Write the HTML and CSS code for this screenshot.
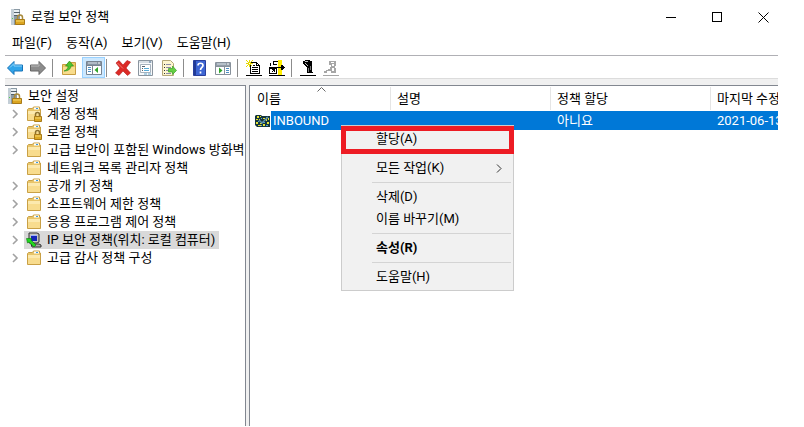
FILE: index.html
```html
<!DOCTYPE html>
<html lang="ko">
<head>
  <meta charset="UTF-8" />
  <title>로컬 보안 정책</title>
  <link rel="stylesheet" href="styles.css">
</head>
<body>

<!-- shared icons -->
<svg class="defs" aria-hidden="true">
  <symbol id="server" viewBox="0 0 16 18">
    <path d="M1 1h9v16H1z" fill="#8b9aa5"/>
    <path d="M1 1h3v16H1z" fill="#c3ced6"/>
    <path d="M4 2h5v2H4zM4 5h5v2H4z" fill="#e9eff2"/>
    <path d="M4 4h6v1H4zM4 7h6v1H4z" fill="#53616b"/>
    <path d="M2 10h1v1H2z" fill="#4fd04f"/>
    <path d="M7.500 12V9.500a2.500 2.500 0 0 1 5 0V12" fill="none" stroke="#a88a3c" stroke-width="1.500"/>
    <path d="M5.500 11.500h9v5h-9z" fill="#dba520" stroke="#a87a18"/>
    <path d="M6 13h8" stroke="#f4d66c"/>
  </symbol>
  <symbol id="folder" viewBox="0 0 16 16">
    <path d="M1.500 14.500v-11l1-1h4l1-1.500h6v2h1v11.500z" fill="#e8c56a" stroke="#c9a045"/>
    <path d="M8 1.500h5v2H8z" fill="#fff"/>
    <path d="M10 2h2v1h-2z" fill="#3c9be0"/>
    <path d="M2 5h12v9H2z" fill="#f8dc8e"/>
    <path d="M2 5h12v3H2z" fill="#fce9ae"/>
  </symbol>
  <symbol id="folder-lock" viewBox="0 0 16 16">
    <use href="#folder"/>
    <path d="M9.500 11V8.500a2 2 0 0 1 4 0V11" fill="none" stroke="#8d7230" stroke-width="1.500"/>
    <path d="M8.500 10.500h7v5h-7z" fill="#dca824" stroke="#a87a18"/>
    <path d="M9 12h6" stroke="#f4d66c"/>
  </symbol>
  <symbol id="chevron" viewBox="0 0 8 10">
    <path d="M2 1l4 4-4 4" fill="none" stroke="#a2a2a2" stroke-width="1.600"/>
  </symbol>
  <symbol id="arrow" viewBox="0 0 16 16">
    <path d="M.5 8L7 1.500V5h8.500v6H7v3.500z"/>
  </symbol>
</svg>

<div class="window">
  <header class="titlebar">
    <svg class="app-icon"><use href="#server"/></svg>
    <h1>로컬 보안 정책</h1>
    <div class="controls">
      <button aria-label="최소화"><svg viewBox="0 0 11 11"><path d="M0 5.500h10"/></svg></button>
      <button aria-label="최대화"><svg viewBox="0 0 11 11"><path d="M.5.5h9v9h-9z"/></svg></button>
      <button aria-label="닫기"><svg class="smooth" viewBox="0 0 11 11"><path d="M.5.5l10 10M10.500.5l-10 10"/></svg></button>
    </div>
  </header>

  <nav class="menubar">
    <button>파일(F)</button>
    <button>동작(A)</button>
    <button>보기(V)</button>
    <button>도움말(H)</button>
  </nav>

  <div class="toolbar">
    <button aria-label="뒤로"><svg viewBox="0 0 16 16"><use href="#arrow" fill="#31a5ea" stroke="#1672b8"/><path d="M3 7.500l4-4V6h8" fill="none" stroke="#8bd3fa"/></svg></button>
    <button aria-label="앞으로"><svg viewBox="0 0 16 16"><g transform="matrix(-1 0 0 1 16 0)"><use href="#arrow" fill="#8c8c8c" stroke="#666"/></g><path d="M1 6h8V3.500" fill="none" stroke="#bbb"/></svg></button>
    <span class="divider"></span>
    <button aria-label="한 수준 위로"><svg viewBox="0 0 16 16">
      <path d="M1.500 14.500v-10h5l1-2h7v12z" fill="#ecc765" stroke="#c79d42"/>
      <path d="M2 7h12v7H2z" fill="#f8dc8c"/>
      <path d="M3 11c3-1 4-3 4-5H4.500L8.500 1l4 5H10c0 3-3 5-7 5z" fill="#4cc431" stroke="#278c1c" stroke-width=".6"/>
    </svg></button>
    <button class="on" aria-label="콘솔 트리 표시" aria-pressed="true"><svg viewBox="0 0 16 16">
      <path d="M.5 1.500h15v13H.5z" fill="#fff" stroke="#788491"/>
      <path d="M1 2h14v3H1z" fill="#8794a3"/><path d="M2 3h9" stroke="#dbe3ea"/><path d="M12 3h2" stroke="#fff"/>
      <path d="M6.500 5v9M1 5.500h14" stroke="#788491"/>
      <path d="M2 7.500h3M2 9.500h3M2 11.500h3" stroke="#4c8fc4"/>
      <path d="M12 7v6L8.500 10z" fill="#2fa52b"/>
    </svg></button>
    <span class="divider"></span>
    <button aria-label="삭제"><svg viewBox="0 0 16 16">
      <path d="M1 3l3-2.500 4 4.500 4-4.500L15.500 2 11 8l4.500 5-3 2.500L8 11l-4 4.500L.5 13 5 8z" fill="#dc2a26" stroke="#b51a18" stroke-width=".6"/>
      <path d="M2.500 3L8 8.500" stroke="#f47a70"/>
    </svg></button>
    <button aria-label="속성"><svg viewBox="0 0 16 16">
      <path d="M.5 .5h14v15H.5z" fill="#f7f9fb" stroke="#8a949e"/>
      <path d="M1 2h13" stroke="#b4c0cb"/><path d="M11 2h2" stroke="#4c6f91"/>
      <path d="M2.500 4.500h10v8h-10z" fill="#fff" stroke="#a6b2bd"/>
      <path d="M4 6.500h3M4 8.500h1M4 10.500h1" stroke="#55616c"/><path d="M6 8.500h5M6 10.500h5" stroke="#58acd8"/>
      <path d="M6 14h3M10 14h3" stroke="#68a9cc"/>
    </svg></button>
    <button aria-label="목록 내보내기"><svg viewBox="0 0 16 16">
      <path d="M1.500.5h8l3 3v12h-11z" fill="#fdf6cf" stroke="#b5a878"/>
      <path d="M3 4.500h1M3 7.500h1M3 10.500h1M3 13.500h1" stroke="#333"/>
      <path d="M5 4.500h5M5 7.500h5M5 10.500h3M5 13.500h5" stroke="#8c8ca8"/>
      <path d="M7.500 8.500h4V6l4 4.500-4 4v-2.500h-4z" fill="#65d044" stroke="#3a9f28" stroke-width=".7"/>
    </svg></button>
    <span class="divider"></span>
    <button aria-label="도움말"><svg viewBox="0 0 16 16">
      <path d="M1.500.5h12v15h-12z" fill="#3e66d3" stroke="#2a3f9c"/><path d="M2 1h2v14H2z" fill="#213b97"/>
      <path d="M6 5.500c0-3 5-3 5 0 0 2-2.500 2-2.500 4.500M8.500 11.500v2" fill="none" stroke="#fff" stroke-width="1.700"/>
    </svg></button>
    <button aria-label="작업 창 표시"><svg viewBox="0 0 16 16">
      <path d="M.5 2.500h15v12H.5z" fill="#fff" stroke="#88919b"/>
      <path d="M1 3h14v3H1z" fill="#929da8"/><path d="M2 4h9" stroke="#dbe3ea"/><path d="M12 4h2" stroke="#fff"/>
      <path d="M9.500 6v8M1 6.500h14" stroke="#88919b"/>
      <path d="M11 8.500h3M11 10.500h3M11 12.500h3" stroke="#4c8fc4"/>
      <path d="M4 7.500v6L7.500 10.500z" fill="#2fa52b"/>
    </svg></button>
    <span class="divider"></span>
    <button aria-label="IP 보안 정책 만들기"><svg class="pixel" viewBox="0 0 16 16">
      <path d="M4 2h7v1h1v1h1v1h1v9H4z" fill="#000"/>
      <path d="M5 3h5v3h3v7H5z" fill="#fff"/>
      <path d="M11 4h1v1h-1z" fill="#fff"/>
      <path d="M7 5h2v1H7zM6 7h6v1H6zM6 9h6v1H6zM6 11h6v1H6z" fill="#000"/>
      <path d="M3 0h1v2H3zM0 0h1v1H0zM1 1h1v1H1zM6 0h1v1H6zM5 1h1v1H5zM0 3h2v1H0zM5 3h2v1H5zM1 5h1v1H1zM0 6h1v1H0zM3 5h1v2H3zM5 5h1v1H5zM2 2h3v3H2z" fill="#e6d800"/>
      <path d="M3 3h1v1H3z" fill="#fff"/>
      <path d="M0 15h16v1H0z" fill="#000"/>
    </svg></button>
    <button aria-label="필터 관리"><svg class="pixel" viewBox="0 0 16 16">
      <path d="M9 0h4v15H9z" fill="#ffee00"/>
      <path d="M4 1h5v1H4zM1 3h1v3H1zM4 2h1v3H4zM5 4h3v1H5z" fill="#000"/>
      <path d="M0 7h8v7H0z" fill="#000"/>
      <path d="M1 9h6v4H1z" fill="#fff"/>
      <path d="M3 9h3v3H5v-1H4v1H3v-1h1v-1H3z" fill="#000"/>
      <path d="M8 7h8v1H8zM12 5h1v5h-1zM13 4h1v7h-1zM14 6h1v3h-1z" fill="#000"/>
      <path d="M13 4h1v1h-1zM13 10h1v1h-1z" fill="#fff"/>
      <path d="M0 15h16v1H0z" fill="#000"/>
    </svg></button>
    <span class="divider"></span>
    <button aria-label="할당"><svg class="pixel" viewBox="0 0 16 16">
      <path d="M3 1h2V0h5v1h2v11h1v1H7V7H6V6H5V5H4V4H3z" fill="#000"/>
      <path d="M5 1h3v1H5zM5 3h1v1H5zM6 4h1v1H6zM7 5h1v1H7z" fill="#bbb"/>
      <path d="M8 8h1v4H8zM10 6h1v4h-1z" fill="#777"/>
      <path d="M0 15h16v1H0z" fill="#000"/>
    </svg></button>
    <button aria-label="할당 취소"><svg class="pixel" viewBox="0 0 16 16">
      <path d="M6 1h7v5h-1v2h1v5H8v-2H6v1H4v1H1v-2h2v-1h2V9h2V7h1V5H6z" fill="#a6a6a6"/>
      <path d="M8 2h3v1H8zM9 4h2v2H9zM9 8h2v3H9zM4 11h2v1H4z" fill="#fff"/>
      <path d="M0 15h16v1H0z" fill="#a6a6a6"/>
    </svg></button>
  </div>

  <main class="panes">
    <aside class="tree">
      <div class="root"><svg class="root-icon"><use href="#server"/></svg>보안 설정</div>
      <ul>
        <li><svg class="chevron"><use href="#chevron"/></svg><span class="node"><svg><use href="#folder-lock"/></svg>계정 정책</span></li>
        <li><svg class="chevron"><use href="#chevron"/></svg><span class="node"><svg><use href="#folder-lock"/></svg>로컬 정책</span></li>
        <li><svg class="chevron"><use href="#chevron"/></svg><span class="node"><svg><use href="#folder"/></svg>고급 보안이 포함된 Windows 방화벽</span></li>
        <li><svg class="chevron"></svg><span class="node"><svg><use href="#folder"/></svg>네트워크 목록 관리자 정책</span></li>
        <li><svg class="chevron"><use href="#chevron"/></svg><span class="node"><svg><use href="#folder"/></svg>공개 키 정책</span></li>
        <li><svg class="chevron"><use href="#chevron"/></svg><span class="node"><svg><use href="#folder"/></svg>소프트웨어 제한 정책</span></li>
        <li><svg class="chevron"><use href="#chevron"/></svg><span class="node"><svg><use href="#folder"/></svg>응용 프로그램 제어 정책</span></li>
        <li><svg class="chevron"><use href="#chevron"/></svg><span class="node selected"><svg viewBox="0 0 16 16">
          <path d="M3 1h8l2 1v8l-2 1H3z" fill="#c4c4c0" stroke="#333"/>
          <path d="M5 3h6v6H5z" fill="#1626b8"/><path d="M5 3.500h6" stroke="#9fb4ff"/>
          <path d="M5 12h8l2 1v2H6z" fill="#aaa" stroke="#333"/>
          <path d="M.5 6.500h5L5 8l5 5-2 2-5-5-1.500 1z" fill="#20d820" stroke="#087c08" stroke-width=".6"/>
        </svg>IP 보안 정책(위치: 로컬 컴퓨터)</span></li>
        <li><svg class="chevron"><use href="#chevron"/></svg><span class="node"><svg><use href="#folder"/></svg>고급 감사 정책 구성</span></li>
      </ul>
    </aside>

    <section class="list">
      <table>
        <thead>
          <tr>
            <th class="col-name">이름<svg class="sort" viewBox="0 0 9 5"><path d="M.5 4.500l4-4 4 4"/></svg></th>
            <th class="col">설명</th>
            <th class="col">정책 할당</th>
            <th>마지막 수정</th>
          </tr>
        </thead>
        <tbody>
          <tr>
            <td class="name"><div class="entry">
              <svg viewBox="0 0 16 14">
                <path d="M1 1h5l1 1h8v11H2l-2-2V2z" fill="#14353c"/>
                <path d="M2 2h2v2H2zM5 2h1v1H5zM1 5h2v1H1zM4 5h1v2H4zM1 8h2v2H1zM5 9h2v1H5zM8 10h2v2H8zM12 8h2v2h-2zM11 5h1v2h-1zM3 11h3v1H3zM13 4h1v2h-1zM8 4h2v1H8z" fill="#e4e332"/>
                <path d="M6 4h1v1H6zM8 8h2v1H8zM6 11h1v1H6zM11 11h2v1h-2zM3 7h1v1H3zM11 3h2v1h-2z" fill="#4f9fd0"/>
                <path d="M4 6l3 3 6-6" fill="none" stroke="#5d8fa8" stroke-width="1.500"/>
              </svg>
              <span>INBOUND</span>
            </div></td>
            <td></td>
            <td>아니요</td>
            <td>2021-06-13</td>
          </tr>
        </tbody>
      </table>
    </section>
  </main>
</div>

<div class="context-menu" role="menu">
  <button role="menuitem">할당(A)</button>
  <hr>
  <button role="menuitem">모든 작업(K)<svg viewBox="0 0 6 9"><path d="M1 .5l4 4-4 4"/></svg></button>
  <hr>
  <button role="menuitem">삭제(D)</button>
  <button role="menuitem">이름 바꾸기(M)</button>
  <hr>
  <button role="menuitem" class="default">속성(R)</button>
  <hr>
  <button role="menuitem">도움말(H)</button>
  <div class="highlight"></div>
</div>

</body>
</html>
```
FILE: styles.css
```css
* {
  box-sizing: border-box;
}
body {
  margin: 0;
  background: #fff;
  color: #000;
  font: 13px/18px Roboto, "Noto Sans CJK KR", sans-serif;
  overflow: hidden;
}
button {
  margin: 0;
  padding: 0;
  border: 0;
  background: none;
  color: inherit;
  font: inherit;
}
svg {
  display: block;
  flex: none;
}
.defs {
  position: absolute;
  width: 0;
  height: 0;
}
.pixel {
  shape-rendering: crispEdges;
}
.window {
  display: flex;
  flex-direction: column;
  height: calc(100vh - 1px);
  margin: 0 26px 0 5px;
}

/* title bar */
.titlebar {
  display: flex;
  align-items: center;
  height: 34px;
  padding: 0 9px 0 5px;
}
.app-icon {
  width: 16px;
  height: 18px;
}
.titlebar h1 {
  margin: 0 auto 0 5px;
  font-size: 13px;
  font-weight: normal;
}
.controls {
  display: flex;
  gap: 35px;
}
.controls svg {
  width: 11px;
  height: 11px;
  fill: none;
  stroke: #000;
  shape-rendering: crispEdges;
}
.controls .smooth {
  shape-rendering: auto;
}

/* menu and toolbar */
.menubar {
  display: flex;
  gap: 14px;
  height: 22px;
  padding: 0 7px 3px;
  border-bottom: 1px solid #b0b0b5;
}
.toolbar {
  display: flex;
  height: 23px;
  padding-top: 1px;
  border-bottom: 1px solid #dcdcdc;
}
.toolbar button {
  width: 23px;
  height: 21px;
  padding: 0 2px;
}
.toolbar svg {
  width: 16px;
  height: 16px;
}
.toolbar .on {
  background: #cce8ff;
  box-shadow: inset 0 0 0 1px #99d1ff;
}
.toolbar .on svg {
  margin: 0 auto;
}
.divider {
  width: 8px;
  height: 18px;
  margin-top: 2px;
  background: linear-gradient(#8c8c8c, #8c8c8c) 1px 0 / 1px 100% no-repeat;
}

/* panes */
.panes {
  display: flex;
  flex: 1;
  gap: 3px;
  padding-top: 6px;
  background: #f0f0f0;
  min-height: 0;
}
.tree,
.list {
  background: #fff;
  border-top: 1px solid #828790;
  overflow: hidden;
  white-space: nowrap;
}
.tree {
  flex: 0 0 241px;
  padding-top: 1px;
  border-right: 1px solid #828790;
}
.list {
  flex: 1;
  border-left: 1px solid #828790;
}
.root {
  display: flex;
  align-items: center;
  gap: 5px;
  height: 18px;
  padding-left: 2px;
}
.root-icon {
  width: 16px;
  height: 18px;
}
.tree ul {
  margin: 0;
  padding: 0 0 0 6px;
  list-style: none;
}
.tree li {
  display: flex;
  align-items: center;
  gap: 5px;
}
.chevron {
  width: 8px;
  height: 10px;
}
.node {
  display: flex;
  align-items: center;
  gap: 5px;
  padding: 0 4px 0 2px;
}
.node svg {
  width: 16px;
  height: 16px;
}
.selected {
  background: #d9d9d9;
}

/* policy list */
table {
  width: 100%;
  table-layout: fixed;
  border-collapse: collapse;
}
th,
td {
  padding: 0 0 0 6px;
  text-align: left;
  font-weight: normal;
  overflow: hidden;
}
th {
  position: relative;
  height: 25px;
  background: linear-gradient(#e5e5e5, #e5e5e5) right / 1px 23px no-repeat;
}
th:last-child {
  background: none;
}
.col-name {
  width: 141px;
  padding-left: 7px;
}
.col {
  width: 160px;
}
.sort {
  position: absolute;
  top: 1px;
  left: 67px;
  width: 9px;
  height: 5px;
  fill: none;
  stroke: #666;
}
td {
  height: 19px;
  background: #0078d7;
  color: #fff;
}
.name {
  padding-left: 5px;
  background: none;
}
.entry {
  display: flex;
  align-items: center;
}
.entry svg {
  width: 16px;
  height: 14px;
}
.entry span {
  flex: 1;
  padding-left: 2px;
  line-height: 19px;
  background: #0078d7;
}

/* context menu */
.context-menu {
  position: absolute;
  top: 125px;
  left: 341px;
  width: 173px;
  padding: 2px;
  border: 1px solid #ccc;
  background: #f1f1f1;
}
.context-menu button {
  display: flex;
  align-items: center;
  justify-content: space-between;
  width: 100%;
  height: 22px;
  padding: 0 9px 0 32px;
}
.context-menu svg {
  width: 6px;
  height: 9px;
  fill: none;
  stroke: #333;
}
.context-menu hr {
  height: 1px;
  margin: 3px 0 3px 28px;
  border: 0;
  background: #d4d4d4;
}
.context-menu .default {
  font-weight: bold;
}
.highlight {
  position: absolute;
  top: 0;
  left: -1px;
  width: 173px;
  height: 28px;
  border: 5px solid #ed1c24;
  pointer-events: none;
}
```
